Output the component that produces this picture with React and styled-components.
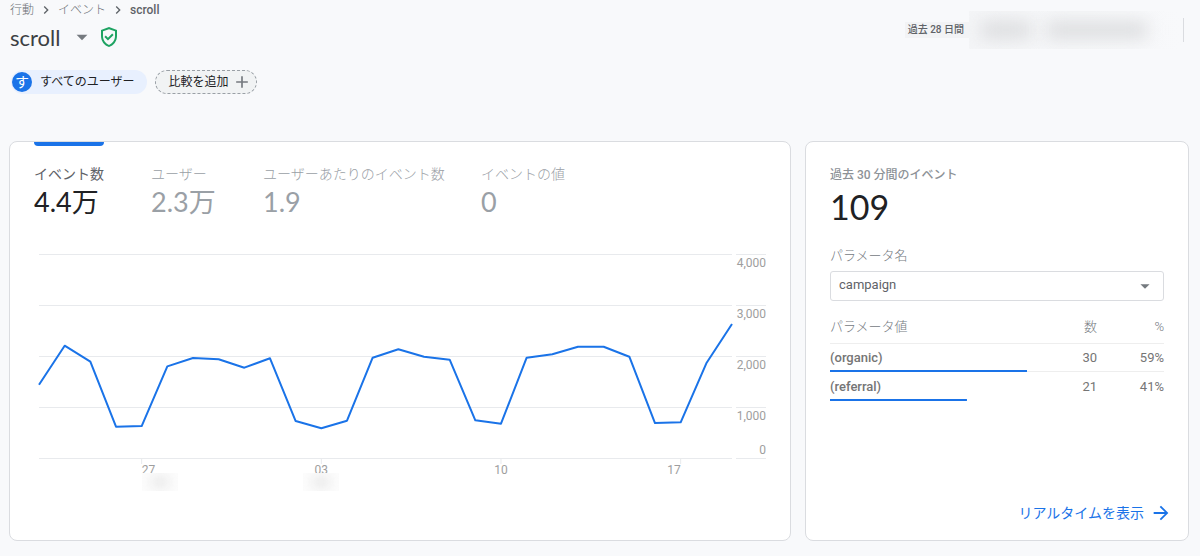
// src/App.jsx
import React, { useState } from "react";
import styled, { createGlobalStyle } from "styled-components";
import {
  MdAdd,
  MdArrowDropDown,
  MdArrowForward,
  MdChevronRight,
  MdOutlineGppGood,
} from "react-icons/md";

const GlobalStyle = createGlobalStyle`
  * {
    box-sizing: border-box;
  }

  body {
    margin: 0;
    background-color: #f8f9fb;
    color: #5f6368;
    font-family: Roboto, "Noto Sans CJK JP", sans-serif;
    font-size: 12px;
  }

  button, select {
    font-family: inherit;
  }
`;

const Page = styled.div`
  padding: 0 11px 15px 9px;
`;

const Header = styled.header`
  display: flex;
  justify-content: space-between;
  align-items: flex-start;
  height: 56px;
  padding-left: 1px;
`;

const Breadcrumbs = styled.nav`
  display: flex;
  align-items: center;
  gap: 4px;
  height: 20px;
  line-height: 20px;
`;

const Crumb = styled.a`
  color: #6b7075;
  font-weight: 300;
  text-decoration: none;
`;

const CurrentCrumb = styled.span`
  color: #5f6368;
  font-weight: 500;
`;

const TitleRow = styled.div`
  display: flex;
  align-items: center;
  gap: 9px;
  height: 34px;
`;

const Title = styled.h1`
  margin: 0;
  color: #3c4043;
  font-family: Lato, sans-serif;
  font-size: 22px;
  font-weight: 400;
`;

const IconButton = styled.button`
  display: flex;
  padding: 0;
  border: none;
  background: none;
  color: #757a7f;
  cursor: pointer;
`;

const TitleActions = styled.div`
  display: flex;
  align-items: center;
  gap: 2px;
  color: #1ea362;
`;

const DateRange = styled.div`
  display: flex;
  align-items: center;
  padding: 11px 5px 0 0;
`;

const DateLabel = styled.span`
  padding: 0 5px 0 3px;
  background-color: #f2f3f5;
  color: #5f6368;
  font-size: 10px;
  font-weight: 500;
  line-height: 16px;
`;

const HiddenDate = styled.div`
  display: flex;
  align-items: center;
  gap: 16px;
  width: 214px;
  height: 38px;
  padding: 0 36px 0 12px;
  overflow: hidden;
  background: linear-gradient(90deg, #f4f5f7, #f8f9fb);
`;

const Smudge = styled.span`
  flex: ${(props) => props.$grow} 1 0;
  height: 14px;
  background-color: #d6d7d9;
  filter: blur(9px);
`;

const Divider = styled.span`
  width: 1px;
  height: 24px;
  background-color: #dadce0;
`;

const Chips = styled.div`
  display: flex;
  gap: 8px;
  padding: 14px 0 47px 2px;
`;

const Chip = styled.button`
  display: flex;
  align-items: center;
  gap: 8px;
  height: 24px;
  padding: 0 13px 0 1px;
  border: none;
  border-radius: 12px;
  background-color: #e8f0fe;
  color: #202124;
  font-size: 12px;
  line-height: 20px;
  cursor: pointer;
`;

const AddChip = styled(Chip)`
  gap: 4px;
  padding: 0 4px 0 12px;
  border: 1px dashed #9aa0a6;
  background-color: #f1f3f4;

  svg {
    color: #757a7f;
  }
`;

const Avatar = styled.span`
  width: 20px;
  height: 20px;
  border-radius: 50%;
  background-color: #1a73e8;
  color: white;
  font-size: 14px;
  line-height: 20px;
  text-align: center;
`;

const Cards = styled.main`
  display: grid;
  grid-template-columns: minmax(0, 1fr) 384px;
  gap: 14px;
`;

const Card = styled.section`
  display: flex;
  flex-direction: column;
  min-height: 400px;
  padding: 0 24px;
  border: 1px solid #dadce0;
  border-radius: 8px;
  background-color: white;
`;

const Metrics = styled.div`
  display: grid;
  grid-template-columns: 117px 112px 218px auto;
  justify-content: start;
  justify-items: start;
`;

const Metric = styled.button`
  padding: 18px 0 0;
  border: none;
  border-top: 4px solid transparent;
  background: none;
  color: ${(props) => (props.$active ? "#5f6368" : "#9aa0a6")};
  text-align: left;
  cursor: pointer;
`;

const ActiveMetric = styled(Metric)`
  padding-top: 0;
  border-top: none;

  &::before {
    content: "";
    display: block;
    height: 4px;
    margin-bottom: 18px;
    border-radius: 0 0 4px 4px;
    background-color: #1a73e8;
  }
`;

const MetricLabel = styled.span`
  display: block;
  font-size: 14px;
  font-weight: ${(props) => (props.$active ? 400 : 300)};
  line-height: 20px;
  white-space: nowrap;
`;

const MetricValue = styled.span`
  display: block;
  color: ${(props) => (props.$active ? "#202124" : "#9aa0a6")};
  font-family: Lato, "Noto Sans CJK JP", sans-serif;
  font-size: 27px;
  line-height: 36px;
`;

const Chart = styled.div`
  display: grid;
  grid-template-columns: minmax(0, 1fr) 30px;
  column-gap: 4px;
  padding: 34px 0 0 5px;
`;

const Plot = styled.svg`
  display: block;
  width: 100%;
  height: 205px;
  overflow: visible;
`;

const Scale = styled.div`
  display: grid;
  grid-template-rows: repeat(4, 51px);
  height: 205px;
  border-bottom: 1px solid #e8eaed;
`;

const ScaleStep = styled.div`
  display: flex;
  flex-direction: column;
  justify-content: space-between;
  align-items: flex-end;
  border-top: 1px solid #e8eaed;
  color: #9e9e9e;
  line-height: 16px;
`;

const Days = styled.div`
  display: grid;
  grid-template-columns: repeat(27, minmax(0, 1fr));
  height: 32px;
`;

const dayColumns = {
  start: (index) => `${index + 1} / span 2`,
  center: (index) => `${index} / span 2`,
  end: (index) => `${index - 1} / span 2`,
};

const Day = styled.div`
  grid-row: 1;
  grid-column: ${(props) => dayColumns[props.$align](props.$index)};
  padding-top: 3px;
  color: #9e9e9e;
  line-height: 16px;
  text-align: ${(props) => props.$align};
`;

const HiddenMonth = styled.div`
  display: flex;
  justify-content: center;
  align-items: center;
  grid-row: 1;
  grid-column: ${(props) => dayColumns[props.$align](props.$index)};
  align-self: end;
  justify-self: ${(props) => props.$align};
  width: 36px;
  height: 18px;
  overflow: hidden;
  background-color: #fcfcfc;

  &::before {
    content: "";
    width: 16px;
    height: 10px;
    background-color: #e6e6e6;
    filter: blur(6px);
  }
`;

const RealtimeTitle = styled.h2`
  margin: 23px 0 0;
  color: #8d9297;
  font-size: 12px;
  font-weight: 500;
  line-height: 20px;
`;

const RealtimeValue = styled.div`
  color: #202124;
  font-family: Lato, sans-serif;
  font-size: 34px;
  line-height: 44px;
`;

const FieldLabel = styled.label`
  margin-top: 17px;
  color: #757a7f;
  font-size: 13px;
  font-weight: 300;
  line-height: 20px;
`;

const SelectBox = styled.div`
  display: grid;
  align-items: center;
  margin-top: 5px;

  > * {
    grid-area: 1 / 1;
  }

  svg {
    justify-self: end;
    margin-right: 8px;
    color: #757a7f;
    pointer-events: none;
  }
`;

const Select = styled.select`
  width: 100%;
  height: 30px;
  padding: 0 8px 3px;
  border: 1px solid #dadce0;
  border-radius: 3px;
  appearance: none;
  background-color: white;
  color: #5f6368;
  font-size: 13px;
`;

const Table = styled.table`
  width: 100%;
  margin-top: 11px;
  border-collapse: collapse;
  color: #757575;
`;

const HeadCell = styled.th`
  width: ${(props) => props.$width || "auto"};
  height: 31px;
  padding: 0;
  border-bottom: 1px solid #eeeeee;
  color: #757a7f;
  font-size: 13px;
  font-weight: 300;
  line-height: 20px;
  text-align: ${(props) => props.$align || "left"};
`;

// The share bar lies on the bottom edge of the row, above the separator
const Row = styled.tr`
  background-image: linear-gradient(#1a73e8, #1a73e8),
    linear-gradient(#eeeeee, #eeeeee);
  background-position: left bottom;
  background-repeat: no-repeat;
  background-size: ${(props) => props.$share}% 2px, 100% 1px;

  &:last-child {
    background-size: ${(props) => props.$share}% 2px, 0 0;
  }
`;

const Cell = styled.td`
  height: 29px;
  padding: 0;
  font-size: 13px;
  font-weight: ${(props) => (props.$name ? 500 : 400)};
  text-align: ${(props) => (props.$name ? "left" : "right")};
`;

const RealtimeLink = styled.a`
  display: flex;
  align-items: center;
  align-self: flex-end;
  gap: 6px;
  margin: auto -8px 16px 0;
  color: #1a73e8;
  font-size: 14px;
  line-height: 22px;
  text-decoration: none;
`;

const metrics = [
  { label: "イベント数", value: "4.4万" },
  { label: "ユーザー", value: "2.3万" },
  { label: "ユーザーあたりのイベント数", value: "1.9" },
  { label: "イベントの値", value: "0" },
];

const events = [
  1437, 2202, 1888, 614, 627, 1797, 1961, 1935, 1771, 1955, 725, 582, 731, 1967,
  2131, 1986, 1927, 739, 673, 1967, 2033, 2182, 2182, 1986, 686, 700, 1857, 2627,
];

const days = [
  { index: 4, label: "27", align: "start", hidden: true },
  { index: 11, label: "03", align: "center", hidden: true },
  { index: 18, label: "10", align: "center" },
  { index: 25, label: "17", align: "end" },
];

const parameters = [
  { name: "(organic)", count: 30, share: 59 },
  { name: "(referral)", count: 21, share: 41 },
];

const EventChart = () => {
  const points = events
    .map((value, i) => `${i * 10},${204 - (value / 4000) * 204}`)
    .join(" ");

  return (
    <Chart>
      <Plot viewBox="0 0 270 205" preserveAspectRatio="none">
        {[0, 51, 102, 153, 204].map((y) => (
          <rect key={y} x="0" y={y} width="270" height="1" fill="#e8eaed" />
        ))}
        {days.map((day) => (
          <path
            key={day.label}
            d={`M${day.index * 10} 204v6`}
            stroke="#e8eaed"
            vectorEffect="non-scaling-stroke"
          />
        ))}
        <polyline
          points={points}
          fill="none"
          stroke="#1a73e8"
          strokeWidth="2"
          strokeLinejoin="round"
          vectorEffect="non-scaling-stroke"
        />
      </Plot>
      <Scale>
        <ScaleStep>4,000</ScaleStep>
        <ScaleStep>3,000</ScaleStep>
        <ScaleStep>2,000</ScaleStep>
        <ScaleStep>
          <span>1,000</span>
          <span>0</span>
        </ScaleStep>
      </Scale>
      <Days>
        {days.map((day) => (
          <Day key={day.label} $index={day.index} $align={day.align}>
            {day.label}
          </Day>
        ))}
        {days
          .filter((day) => day.hidden)
          .map((day) => (
            <HiddenMonth
              key={day.label}
              $index={day.index}
              $align={day.align}
            />
          ))}
      </Days>
    </Chart>
  );
};

const App = () => {
  const [parameter, setParameter] = useState("campaign");
  const [active, setActive] = useState(0);

  return (
    <>
      <GlobalStyle />
      <Page>
        <Header>
          <div>
            <Breadcrumbs>
              <Crumb href="#">行動</Crumb>
              <MdChevronRight size={16} />
              <Crumb href="#">イベント</Crumb>
              <MdChevronRight size={16} />
              <CurrentCrumb>scroll</CurrentCrumb>
            </Breadcrumbs>
            <TitleRow>
              <Title>scroll</Title>
              <TitleActions>
                <IconButton aria-label="イベントを選択">
                  <MdArrowDropDown size={26} />
                </IconButton>
                <MdOutlineGppGood size={24} />
              </TitleActions>
            </TitleRow>
          </div>
          <DateRange>
            <DateLabel>過去 28 日間</DateLabel>
            <HiddenDate>
              <Smudge $grow={1} />
              <Smudge $grow={2} />
            </HiddenDate>
            <Divider />
          </DateRange>
        </Header>

        <Chips>
          <Chip>
            <Avatar>す</Avatar>
            すべてのユーザー
          </Chip>
          <AddChip>
            比較を追加
            <MdAdd size={20} />
          </AddChip>
        </Chips>

        <Cards>
          <Card>
            <Metrics>
              {metrics.map((metric, i) => {
                const Tab = i === active ? ActiveMetric : Metric;
                return (
                  <Tab
                    key={metric.label}
                    $active={i === active}
                    onClick={() => setActive(i)}
                  >
                    <MetricLabel $active={i === active}>
                      {metric.label}
                    </MetricLabel>
                    <MetricValue $active={i === active}>
                      {metric.value}
                    </MetricValue>
                  </Tab>
                );
              })}
            </Metrics>
            <EventChart />
          </Card>

          <Card>
            <RealtimeTitle>過去 30 分間のイベント</RealtimeTitle>
            <RealtimeValue>109</RealtimeValue>
            <FieldLabel htmlFor="parameter">パラメータ名</FieldLabel>
            <SelectBox>
              <Select
                id="parameter"
                value={parameter}
                onChange={(e) => setParameter(e.target.value)}
              >
                <option value="campaign">campaign</option>
              </Select>
              <MdArrowDropDown size={22} />
            </SelectBox>
            <Table>
              <thead>
                <tr>
                  <HeadCell>パラメータ値</HeadCell>
                  <HeadCell $width="60px" $align="right">
                    数
                  </HeadCell>
                  <HeadCell $width="67px" $align="right">
                    %
                  </HeadCell>
                </tr>
              </thead>
              <tbody>
                {parameters.map((row) => (
                  <Row key={row.name} $share={row.share}>
                    <Cell $name>{row.name}</Cell>
                    <Cell>{row.count}</Cell>
                    <Cell>{row.share}%</Cell>
                  </Row>
                ))}
              </tbody>
            </Table>
            <RealtimeLink href="#">
              リアルタイムを表示
              <MdArrowForward size={22} />
            </RealtimeLink>
          </Card>
        </Cards>
      </Page>
    </>
  );
};

export default App;
